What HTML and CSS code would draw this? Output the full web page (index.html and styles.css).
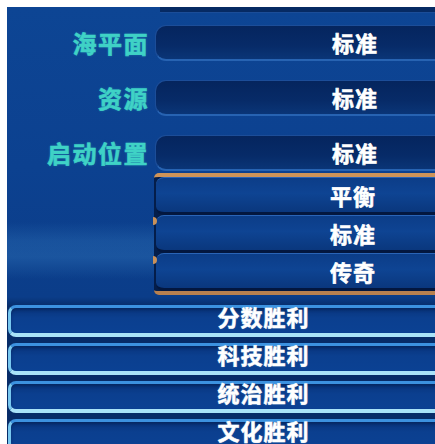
FILE: index.html
```html
<!DOCTYPE html>
<html lang="zh">
<head>
<meta charset="utf-8">
<title>游戏设置</title>
<link rel="stylesheet" href="styles.css">
</head>
<body>
<div class="panel">
  <div class="stub"></div>
  <div class="settings">
    <div class="label">海平面</div>
    <div class="field">标准</div>
    <div class="label">资源</div>
    <div class="field">标准</div>
    <div class="label">启动位置</div>
    <div class="field">标准</div>
  </div>
  <div class="dropdown">
    <div class="item">平衡</div>
    <div class="item">标准</div>
    <div class="item">传奇</div>
    <span class="knob knob-1"></span>
    <span class="knob knob-2"></span>
  </div>
  <div class="victories">
    <div class="bar">分数胜利</div>
    <div class="bar">科技胜利</div>
    <div class="bar">统治胜利</div>
    <div class="bar">文化胜利</div>
  </div>
</div>
</body>
</html>
```

FILE: styles.css
```css
html, body {
  margin: 0;
  padding: 0;
  background: #ffffff;
  overflow: hidden;
}

body {
  padding: 7px 0 0 7px;
  font-family: "Noto Sans CJK SC", "Noto Sans", sans-serif;
}

.panel {
  width: 428px;
  height: 437px;
  overflow: hidden;
  display: flex;
  flex-direction: column;
  background:
    linear-gradient(to bottom, transparent 0, transparent 215px, rgba(70, 150, 215, 0.22) 234px, rgba(70, 150, 215, 0.26) 250px, transparent 272px) 0 0 / 148px 100% no-repeat,
    linear-gradient(to bottom, #0d4594 0, #0c4190 160px, #0b3d89 290px, #072c68 300px, #072c68 100%);
}

.stub {
  flex: none;
  margin-left: 153px;
  width: 400px;
  height: 5px;
  background: #062a63;
  border-bottom: 1px solid #1b4d98;
}

.settings {
  flex: none;
  margin-top: 12px;
  display: grid;
  grid-template-columns: 141px 400px;
  column-gap: 7px;
  row-gap: 19px;
  align-items: center;
}

.label {
  text-align: right;
  color: #3fd2c6;
  font-size: 24px;
  font-weight: 700;
  letter-spacing: 1.5px;
  line-height: 36px;
  margin-right: -1px;
  -webkit-text-stroke: 0.6px #3fd2c6;
  text-shadow: 0 0 3px rgba(60, 210, 200, 0.35);
}

.field {
  box-sizing: border-box;
  height: 36px;
  border-radius: 11px 0 0 11px;
  border: 1px solid #1c4d98;
  border-bottom: 2px solid #2763b2;
  background: linear-gradient(to bottom, #05255e 0, #072b68 60%, #0a3577 100%);
  color: #ffffff;
  font-size: 22px;
  font-weight: 700;
  letter-spacing: 1px;
  line-height: 33px;
  text-align: center;
  -webkit-text-stroke: 0.6px #ffffff;
}

.dropdown {
  position: relative;
  flex: none;
  margin-top: 2px;
  margin-left: 147px;
  width: 400px;
  border-top: 4px solid #cf9458;
  border-bottom: 4px solid #b8804f;
  border-radius: 5px 0 0 5px;
  background: #041d4a;
}

.item {
  box-sizing: border-box;
  height: 38px;
  margin-left: 2px;
  border-radius: 8px 0 0 8px;
  border-top: 1px solid #2a64b6;
  border-bottom: 3px solid #03173f;
  background: linear-gradient(to bottom, #0c3d88 0, #0e4493 45%, #0a377d 100%);
  color: #ffffff;
  font-size: 22px;
  font-weight: 700;
  letter-spacing: 1px;
  line-height: 34px;
  text-align: center;
  text-indent: -4px;
  -webkit-text-stroke: 0.6px #ffffff;
}

.knob {
  position: absolute;
  left: -1px;
  width: 4px;
  height: 8px;
  border-radius: 0 4px 4px 0;
  background: #c9915a;
}

.knob-1 { top: 40px; }
.knob-2 { top: 79px; }

.victories {
  flex: none;
  margin-top: 10px;
  margin-left: 1px;
  display: flex;
  flex-direction: column;
  gap: 6px;
}

.bar {
  box-sizing: border-box;
  width: 508px;
  height: 32px;
  border-radius: 8px 0 0 8px;
  border-top: 3px solid #3c92e0;
  border-left: 3px solid #78c8f0;
  border-bottom: 4px solid #a9e3f8;
  background: linear-gradient(to bottom, #08347c 0, #0b3f8f 40%, #0b4193 100%);
  box-shadow: inset 0 2px 3px rgba(3, 25, 70, 0.5);
  color: #ffffff;
  font-size: 22px;
  font-weight: 700;
  letter-spacing: 1px;
  line-height: 17px;
  text-align: center;
  -webkit-text-stroke: 0.5px #ffffff;
  text-shadow: 0 0 2px rgba(180, 230, 255, 0.4);
}
```
